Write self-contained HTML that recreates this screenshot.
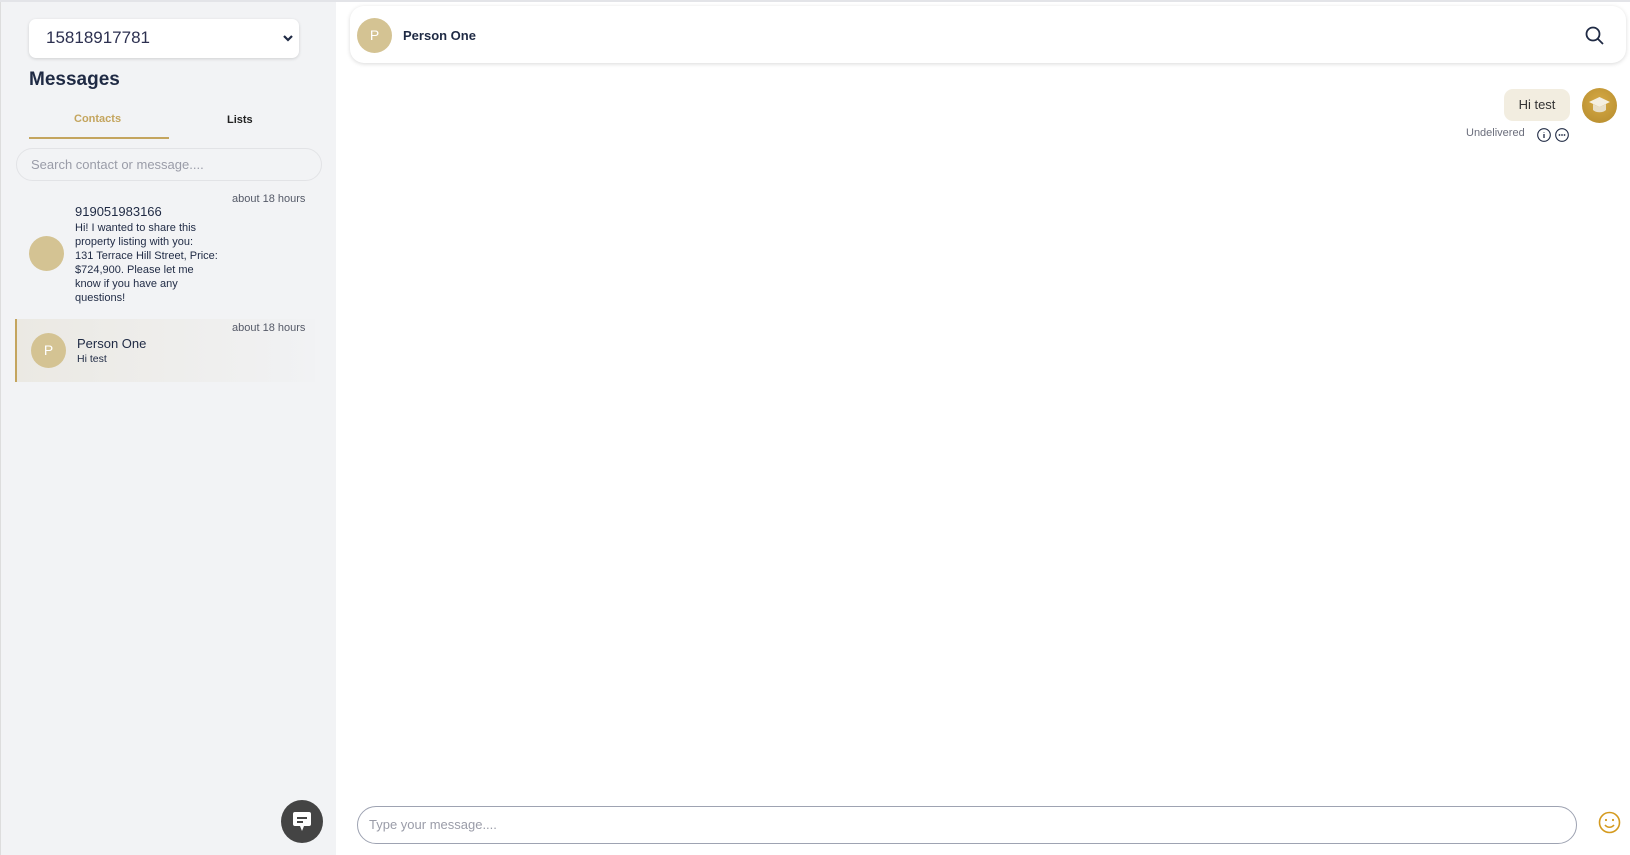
<!DOCTYPE html>
<html><head><meta charset="utf-8"><style>
*{box-sizing:border-box;margin:0;padding:0}
body{width:1630px;height:855px;overflow:hidden;background:#fff;font-family:"Liberation Sans",sans-serif;color:#1f2a44;position:relative}
.side{position:absolute;left:0;top:0;width:336px;height:855px;background:#f2f3f5;border-left:1px solid #ddd}
.abs{position:absolute}
.sel{left:28px;top:19px;width:270px;height:39px;background:#fff;border-radius:7px;box-shadow:0 1px 3px rgba(0,0,0,.15);font-size:17px;color:#2c3050;padding:9px 0 0 17px}
.av{position:absolute;border-radius:50%;background:#d4c393;color:#fff;font-size:14px;text-align:center}
</style></head><body>
<div class="abs" style="left:0;top:0;width:1630px;height:2px;background:#e3e4e8;z-index:5"></div>
<div class="side">
 <div class="abs sel">15818917781
  <svg class="abs" style="left:253px;top:15px" width="12" height="9" viewBox="0 0 12 9"><path d="M2 2l4 4 4-4" stroke="#1f2a44" stroke-width="2.2" fill="none"/></svg></div>
 <div class="abs" style="left:28px;top:69px;font-size:19px;font-weight:bold">Messages</div>
 <div class="abs" style="left:73px;top:113px;font-size:11px;font-weight:bold;color:#c4a55e">Contacts</div>
 <div class="abs" style="left:226px;top:114px;font-size:11px;font-weight:bold;color:#222">Lists</div>
 <div class="abs" style="left:28px;top:137px;width:140px;height:2px;background:#c4a55e"></div>
 <div class="abs" style="left:15px;top:148px;width:306px;height:33px;border:1.5px solid #e2e3e6;border-radius:17px;padding:8px 14px;font-size:13px;color:#9a9ca8">Search contact or message....</div>
 <div class="abs" style="left:231px;top:193px;font-size:11px;color:#555a68">about 18 hours</div>
 <div class="av" style="left:28px;top:236px;width:35px;height:35px"></div>
 <div class="abs" style="left:74px;top:204px;font-size:13px">919051983166</div>
 <div class="abs" style="left:74px;top:221px;width:150px;font-size:11px;line-height:14px">Hi! I wanted to share this<br>property listing with you:<br>131 Terrace Hill Street, Price:<br>$724,900. Please let me<br>know if you have any<br>questions!</div>
 <div class="abs" style="left:14px;top:319px;width:300px;height:63px;background:linear-gradient(90deg,#ebe9e3,#f1f2f4);border-left:2px solid #c4a55e"></div>
 <div class="abs" style="left:231px;top:322px;font-size:11px;color:#555a68">about 18 hours</div>
 <div class="av" style="left:30px;top:333px;width:35px;height:35px;line-height:35px">P</div>
 <div class="abs" style="left:76px;top:336px;font-size:13px">Person One</div>
 <div class="abs" style="left:76px;top:353px;font-size:10.5px">Hi test</div>
 <div class="abs" style="left:280px;top:800px;width:42px;height:43px;border-radius:50%;background:#444">
  <svg class="abs" style="left:11px;top:11px" width="20" height="22" viewBox="0 0 20 22"><path d="M3 1h14a2 2 0 0 1 2 2v10a2 2 0 0 1-2 2h-5l-2 5-2-5H3a2 2 0 0 1-2-2V3a2 2 0 0 1 2-2z" fill="#fff"/><rect x="5" y="6" width="10" height="2" fill="#444"/><rect x="5" y="10" width="6" height="2" fill="#444"/></svg></div>
</div>
<div class="abs" style="left:350px;top:6px;width:1276px;height:57px;border-radius:14px;box-shadow:0 1px 4px rgba(0,0,0,.15);background:#fff"></div>
<div class="av" style="left:357px;top:18px;width:35px;height:35px;line-height:35px">P</div>
<div class="abs" style="left:403px;top:28px;font-size:13px;font-weight:bold">Person One</div>
<svg class="abs" style="left:1585px;top:26px" width="20" height="20" viewBox="0 0 20 20"><circle cx="8" cy="8" r="6.5" stroke="#1f2a44" stroke-width="1.8" fill="none"/><path d="M13 13l5 5" stroke="#1f2a44" stroke-width="1.8"/></svg>
<div class="abs" style="left:1504px;top:89px;width:66px;height:32px;border-radius:9px;background:#f2ede0;font-size:13px;text-align:center;line-height:32px;color:#333">Hi test</div>
<div class="abs" style="left:1582px;top:88px;width:35px;height:35px;border-radius:50%;background:radial-gradient(circle at 50% 40%,#d6aa45,#b48a2c)">
 <svg class="abs" style="left:6px;top:8px" width="23" height="18" viewBox="0 0 23 18"><path d="M1 6l10.5-5 10.5 5-10.5 5z" fill="#f4efe2"/><path d="M5 8v6c3 3 10 3 13 0V8l-6.5 3z" fill="#e8dfc9"/></svg></div>
<div class="abs" style="left:1466px;top:127px;font-size:11px;color:#6b6e7c">Undelivered</div>
<svg class="abs" style="left:1536px;top:127px" width="34" height="16" viewBox="0 0 34 16"><circle cx="8" cy="8" r="6.3" stroke="#1f2a44" stroke-width="1.1" fill="none"/><path d="M8 7v4M8 5v.5" stroke="#1f2a44" stroke-width="1.3"/><circle cx="26" cy="8" r="6.3" stroke="#1f2a44" stroke-width="1.1" fill="none"/><circle cx="23.5" cy="8" r=".9" fill="#1f2a44"/><circle cx="26" cy="8" r=".9" fill="#1f2a44"/><circle cx="28.5" cy="8" r=".9" fill="#1f2a44"/></svg>
<div class="abs" style="left:357px;top:806px;width:1220px;height:38px;border:1.3px solid #9ea3b2;border-radius:19px;padding:10px 11px;font-size:13px;color:#9a9ca8">Type your message....</div>
<svg class="abs" style="left:1598px;top:811px" width="23" height="23" viewBox="0 0 23 23"><circle cx="11.5" cy="11.5" r="10" stroke="#d49a1e" stroke-width="1.6" fill="none"/><circle cx="8" cy="9" r="1.1" fill="#d49a1e"/><circle cx="15" cy="9" r="1.1" fill="#d49a1e"/><path d="M7 14c2.5 3 6.5 3 9 0" stroke="#d49a1e" stroke-width="1.6" fill="none"/></svg>
</body></html>
